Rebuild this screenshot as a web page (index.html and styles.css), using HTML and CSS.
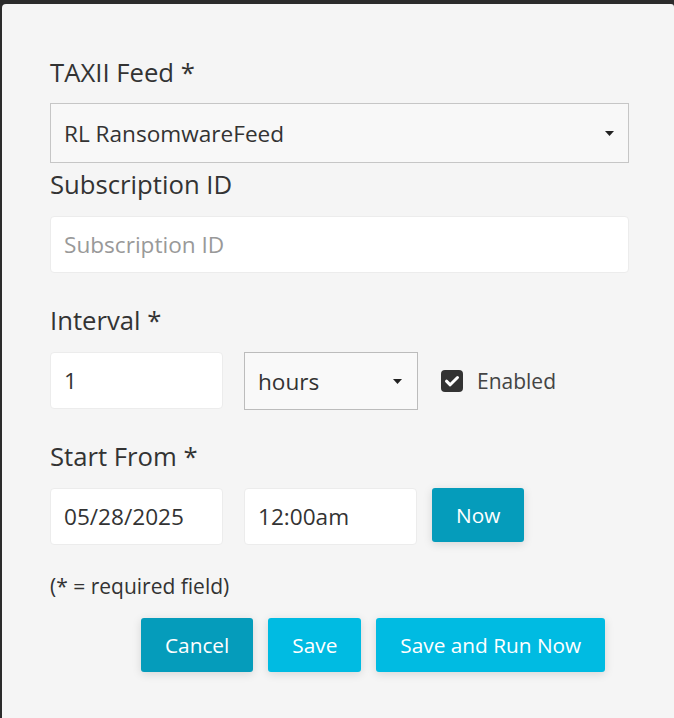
FILE: index.html
```html
<!DOCTYPE html>
<html>
<head>
<meta charset="utf-8">
<link rel="stylesheet" href="styles.css">
</head>
<body>
<div class="modal">
  <label class="label first">TAXII Feed *</label>
  <div class="select wide">
    <span>RL RansomwareFeed</span>
    <svg class="caret" width="9" height="5" viewBox="0 0 9 5"><path d="M0 0H9L4.5 5Z" fill="#222"/></svg>
  </div>

  <label class="label l2">Subscription ID</label>
  <input class="input wide inp2" type="text" placeholder="Subscription ID">

  <label class="label l3">Interval *</label>
  <div class="row row1">
    <input class="input small" type="text" value="1">
    <div class="select small">
      <span>hours</span>
      <svg class="caret" width="9" height="5" viewBox="0 0 9 5"><path d="M0 0H9L4.5 5Z" fill="#222"/></svg>
    </div>
    <div class="check">
      <span class="box"><svg width="22" height="22" viewBox="0 0 22 22"><path d="M5.5 11.2 L9.2 14.8 L16.5 7.5" fill="none" stroke="#fff" stroke-width="3" stroke-linecap="round" stroke-linejoin="round"/></svg></span>
      <span class="check-text">Enabled</span>
    </div>
  </div>

  <label class="label l4">Start From *</label>
  <div class="row row2">
    <input class="input small" type="text" value="05/28/2025">
    <input class="input small" type="text" value="12:00am">
    <button class="btn dark now">Now</button>
  </div>

  <p class="note">(* = required field)</p>

  <div class="actions">
    <button class="btn dark">Cancel</button>
    <button class="btn">Save</button>
    <button class="btn">Save and Run Now</button>
  </div>
</div>
</body>
</html>
```
FILE: styles.css
```css
html, body {
  margin: 0;
  padding: 0;
  background: #2b2b2b;
  overflow: hidden;
  height: 718px;
}
body {
  font-family: "Open Sans", "Noto Sans", sans-serif;
  color: #333;
}
.modal {
  margin: 4px 0 0 2px;
  background: #f5f5f5;
  border-radius: 4px 3px 0 0;
  height: 714px;
  padding: 54px 0 0 48px;
  box-sizing: border-box;
}
.label {
  display: block;
  font-size: 25.7px;
  line-height: 30px;
  height: 30px;
  color: #333;
}
.l2 { margin-top: 7px; }
.l3 { margin-top: 33px; }
.l4 { margin-top: 32px; }
.select {
  display: flex;
  align-items: center;
  justify-content: space-between;
  box-sizing: border-box;
  border: 1px solid #c6c6c6;
  background: #f8f8f8;
  font-size: 22.6px;
  color: #333;
  padding: 0 14px 0 13px;
}
.select.wide {
  margin-top: 15px;
  width: 579px;
  height: 60px;
}
.select.small {
  width: 174px;
  height: 58px;
  padding-right: 15px;
  background: #f9f9f9;
  border-color: #bcbcbc;
}
.caret { display: block; }
.input {
  display: block;
  box-sizing: border-box;
  border: 1px solid #ececec;
  border-radius: 4px;
  background: #fff;
  font-family: "Open Sans", "Noto Sans", sans-serif;
  font-size: 22.6px;
  color: #333;
  padding: 0 13px;
  margin: 0;
  outline: none;
}
.input::placeholder { color: #999; }
.input.wide {
  width: 579px;
  height: 57px;
}
.inp2 { margin-top: 16px; }
.input.small {
  width: 173px;
  height: 57px;
}
.row {
  display: flex;
  align-items: flex-start;
}
.row1 { margin-top: 16px; }
.row2 { margin-top: 16px; }
.row1 .select { margin-left: 21px; }
.row2 .input + .input { margin-left: 21px; }
.check {
  display: flex;
  align-items: center;
  height: 58px;
  margin-left: 23px;
}
.box {
  width: 22px;
  height: 22px;
  border-radius: 4px;
  background: #333;
  display: block;
}
.box svg { display: block; }
.check-text {
  margin-left: 14px;
  font-size: 21px;
  color: #444;
}
.btn {
  font-family: "Open Sans", "Noto Sans", sans-serif;
  font-size: 20.8px;
  color: #fff;
  background: #00bbe2;
  border: none;
  border-radius: 3px;
  height: 54px;
  padding: 0 24px;
  margin: 0;
  box-shadow: 0 2px 10px rgba(0, 0, 0, 0.13);
}
.btn.dark { background: #059cbb; }
.now { margin-left: 15px; }
.note {
  margin: 26px 0 0 0;
  font-size: 21px;
  line-height: 30px;
  color: #333;
}
.actions {
  display: flex;
  gap: 15px;
  margin: 17px 0 0 91px;
}
```
